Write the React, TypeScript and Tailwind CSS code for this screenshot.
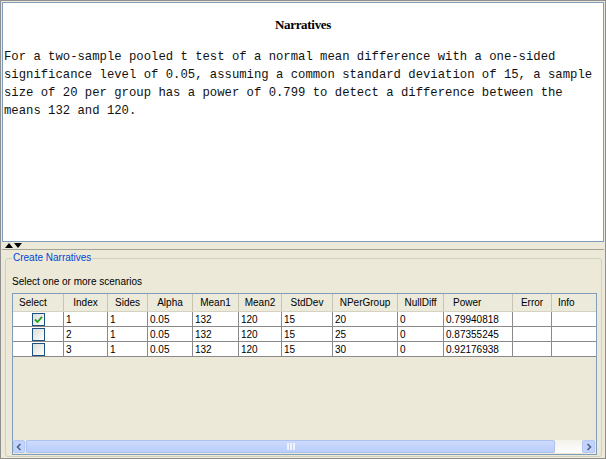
// Narratives viewer: text pane on top, splitter, then the scenario grid in a group box.

const LINES = [
  "For a two-sample pooled t test of a normal mean difference with a one-sided",
  "significance level of 0.05, assuming a common standard deviation of 15, a sample",
  "size of 20 per group has a power of 0.799 to detect a difference between the",
  "means 132 and 120.",
];

type Col = { key: string; label: string; w: string; head: string };

const COLS: Col[] = [
  { key: "select", label: "Select", w: "w-[51px]", head: "justify-start pl-[6px]" },
  { key: "index", label: "Index", w: "w-[44px]", head: "justify-center" },
  { key: "sides", label: "Sides", w: "w-[40px]", head: "justify-center" },
  { key: "alpha", label: "Alpha", w: "w-[45px]", head: "justify-center" },
  { key: "mean1", label: "Mean1", w: "w-[46px]", head: "justify-center" },
  { key: "mean2", label: "Mean2", w: "w-[43px]", head: "justify-center" },
  { key: "sd", label: "StdDev", w: "w-[51px]", head: "justify-center" },
  { key: "n", label: "NPerGroup", w: "w-[65px]", head: "justify-center" },
  { key: "null", label: "NullDiff", w: "w-[46px]", head: "justify-center" },
  { key: "power", label: "Power", w: "w-[69px]", head: "justify-start pl-[9px]" },
  { key: "error", label: "Error", w: "w-[39px]", head: "justify-center" },
  { key: "info", label: "Info", w: "w-[44px]", head: "justify-start pl-[6px]" },
];

const ROWS = [
  { checked: true, cells: ["1", "1", "0.05", "132", "120", "15", "20", "0", "0.79940818", "", ""] },
  { checked: false, cells: ["2", "1", "0.05", "132", "120", "15", "25", "0", "0.87355245", "", ""] },
  { checked: false, cells: ["3", "1", "0.05", "132", "120", "15", "30", "0", "0.92176938", "", ""] },
];

function Checkbox({ checked }: { checked: boolean }) {
  return (
    <div className="flex h-[13px] w-[13px] items-center justify-center border border-[#1c5180] bg-gradient-to-br from-[#dcdcd7] to-white">
      {checked && (
        <svg width="9" height="9" viewBox="0 0 9 9">
          <path d="M1 4.5 L3.5 7 L8 1.8" fill="none" stroke="#21a121" strokeWidth="1.8" />
        </svg>
      )}
    </div>
  );
}

function ScrollBar() {
  return (
    <div className="mr-[1px] flex h-[13px] items-stretch">
      <div className="flex w-[12px] items-center justify-center rounded-[2px] border border-[#b4c8f6] bg-[#c3d3fd]">
        <svg width="6" height="8" viewBox="0 0 6 8">
          <path d="M4.5 1 L1.5 4 L4.5 7" fill="none" stroke="#4d6185" strokeWidth="1.6" />
        </svg>
      </div>
      <div className="ml-[1px] flex w-[529px] items-center justify-center rounded-[2px] border border-[#aec2f0] bg-gradient-to-b from-[#cddafd] to-[#b9cefa]">
        <div className="flex gap-[1px]">
          <div className="h-[7px] w-[2px] bg-[#eef3fe]" />
          <div className="h-[7px] w-[2px] bg-[#eef3fe]" />
          <div className="h-[7px] w-[2px] bg-[#eef3fe]" />
        </div>
      </div>
      <div className="flex-1 bg-gradient-to-b from-[#f3f1ea] to-[#fefefe]" />
      <div className="flex w-[13px] items-center justify-center rounded-[2px] border border-[#b4c8f6] bg-[#c3d3fd]">
        <svg width="6" height="8" viewBox="0 0 6 8">
          <path d="M1.5 1 L4.5 4 L1.5 7" fill="none" stroke="#4d6185" strokeWidth="1.6" />
        </svg>
      </div>
    </div>
  );
}

export default function App() {
  return (
    <div className="flex h-[459px] w-[606px] flex-col border border-[#8f8f8f] bg-[#ece9d8] p-[1px] font-['Liberation_Sans',sans-serif] text-[10px] text-black">
      {/* Narrative text pane */}
      <div className="h-[240px] border border-[#7f9db9] bg-white">
        <div className="pt-[14px] text-center font-['Liberation_Serif',serif] text-[13px] font-bold leading-[15px] tracking-[-0.3px]">
          Narratives
        </div>
        <div className="mt-[16px] pl-[1px] font-['Liberation_Mono',monospace] text-[12.25px] leading-[18px] whitespace-pre text-[#111]">
          {LINES.map((l) => (
            <div key={l}>{l}</div>
          ))}
        </div>
      </div>

      {/* splitter */}
      <div className="flex h-[8px] items-center gap-[1px] border-b border-[#a5a398] pl-[3px]">
        <svg width="8" height="5" viewBox="0 0 8 5">
          <path d="M0 5 L4 0 L8 5 Z" fill="#000" />
        </svg>
        <svg width="8" height="5" viewBox="0 0 8 5">
          <path d="M0 0 L8 0 L4 5 Z" fill="#000" />
        </svg>
      </div>

      <div className="flex flex-1 flex-col px-[3px] pt-[2px]">
        <fieldset className="flex flex-1 flex-col rounded-[3px] border border-[#d0d0bf] pb-[1px] pl-[6px] pr-[4px]">
          <legend className="px-[1px] text-[10px] leading-[12px] text-[#0046d5]">Create Narratives</legend>
          <div className="mt-[12px] h-[12px] leading-[12px]">Select one or more scenarios</div>

          {/* scenario grid */}
          <div className="mt-[5px] flex flex-1 flex-col border border-[#7f9db9]">
            <div className="flex h-[18px] border-b border-[#d6d2c2] bg-[#ebeadb]">
              {COLS.map((c, i) => (
                <div
                  key={c.key}
                  className={`${c.w} flex items-center ${c.head} ${i < COLS.length - 1 ? "border-r border-[#c7c5b2]" : ""}`}
                >
                  {c.label}
                </div>
              ))}
            </div>
            {ROWS.map((r, ri) => (
              <div key={ri} className="flex h-[15px] border-b border-[#8a8a8a] bg-white">
                <div className="flex w-[51px] items-center justify-center border-r border-[#8a8a8a]">
                  <Checkbox checked={r.checked} />
                </div>
                {r.cells.map((v, ci) => (
                  <div
                    key={ci}
                    className={`${COLS[ci + 1].w} flex items-center pl-[2px] ${ci < r.cells.length - 1 ? "border-r border-[#8a8a8a]" : ""}`}
                  >
                    {v}
                  </div>
                ))}
              </div>
            ))}
            <div className="flex-1" />
            <ScrollBar />
            <div className="h-[1px]" />
          </div>
        </fieldset>
      </div>
    </div>
  );
}
